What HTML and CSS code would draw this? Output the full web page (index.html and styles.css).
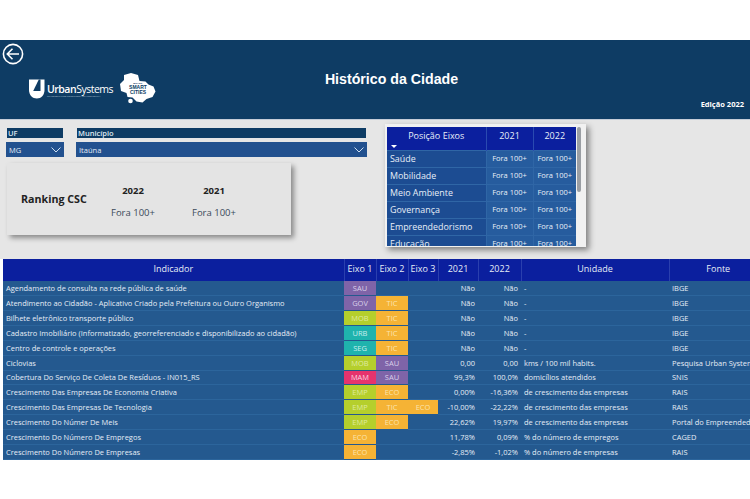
FILE: index.html
```html
<!DOCTYPE html>
<html lang="pt-BR">
<head>
  <meta charset="UTF-8">
  <title>Histórico da Cidade</title>
  <link rel="stylesheet" href="styles.css">
</head>
<body>
  <header class="topo">
    <svg class="voltar" viewBox="0 0 22 22" width="22" height="22">
      <circle cx="11" cy="11" r="9.6" fill="none" stroke="#fff" stroke-width="1.6"/>
      <path d="M17 11H5.5M10.5 5.8L5.3 11l5.2 5.2" fill="none" stroke="#fff" stroke-width="1.6"/>
    </svg>
    <div class="logos">
      <svg class="marca" viewBox="0 0 16 20" width="16" height="20">
        <path d="M0 .5h15.5V11c0 5-3.4 8.5-7.7 8.5S0 16 0 11z" fill="#fff"/>
        <path d="M9.8.5h1.7V12H4.2z" fill="#0e3c64"/>
      </svg>
      <div class="urban">
        <span class="urban-nome"><b>Urban</b>Systems</span>
        <span class="urban-sub">TRANSFORMANDO CONSULTORIA EM INTELIGÊNCIA</span>
      </div>
      <svg class="smart" viewBox="0 0 36 31" width="36" height="31">
        <path d="M11 0l7 2 1.500 6 6 .5 3 3 5 2 2 5-3 5.500-6 2-4 3.500-6-1-4-4-5-.5-1-4L1 18 0 11l4-4V2z" fill="#fff"/>
        <circle cx="10.500" cy="28" r="2.300" fill="#fff"/>
        <text x="18" y="11" class="smart-a">BRASIL</text>
        <text x="18" y="15.500" class="smart-b">SMART</text>
        <text x="18" y="20.500" class="smart-b">CITIES</text>
      </svg>
    </div>
    <h1 class="titulo">Histórico da Cidade</h1>
    <div class="edicao">Edição 2022</div>
  </header>

  <section class="painel">
    <div class="esquerda">
      <div class="filtros">
        <div class="filtro filtro-uf">
          <div class="filtro-nome">UF</div>
          <div class="filtro-caixa">MG
            <svg viewBox="0 0 10 6" width="10" height="6"><path d="M.5.5L5 5 9.500.5" fill="none" stroke="#cfe0f2"/></svg>
          </div>
        </div>
        <div class="filtro filtro-mun">
          <div class="filtro-nome">Município</div>
          <div class="filtro-caixa">Itaúna
            <svg viewBox="0 0 10 6" width="10" height="6"><path d="M.5.5L5 5 9.500.5" fill="none" stroke="#cfe0f2"/></svg>
          </div>
        </div>
      </div>
      <div class="ranking">
        <div class="ranking-nome">Ranking CSC</div>
        <div class="ranking-ano"><b>2022</b><span>Fora 100+</span></div>
        <div class="ranking-ano"><b>2021</b><span>Fora 100+</span></div>
      </div>
    </div>

    <div class="eixos">
      <div class="eixos-clip">
        <table class="eixos-tab">
          <colgroup><col class="e-nome"><col class="e-a"><col class="e-b"></colgroup>
          <thead>
            <tr><th>Posição Eixos<i class="seta"></i></th><th>2021</th><th>2022</th></tr>
          </thead>
          <tbody>
            <tr><td>Saúde</td><td>Fora 100+</td><td>Fora 100+</td></tr>
            <tr><td>Mobilidade</td><td>Fora 100+</td><td>Fora 100+</td></tr>
            <tr><td>Meio Ambiente</td><td>Fora 100+</td><td>Fora 100+</td></tr>
            <tr><td>Governança</td><td>Fora 100+</td><td>Fora 100+</td></tr>
            <tr><td>Empreendedorismo</td><td>Fora 100+</td><td>Fora 100+</td></tr>
            <tr><td>Educação</td><td>Fora 100+</td><td>Fora 100+</td></tr>
          </tbody>
        </table>
      </div>
      <div class="rolagem"><div class="rolagem-barra"></div></div>
    </div>
  </section>

  <table class="dados">
    <colgroup>
      <col class="c-ind"><col class="c-eixo"><col class="c-eixo"><col class="c-eixo3">
      <col class="c-a"><col class="c-b"><col class="c-uni"><col class="c-fonte">
    </colgroup>
    <thead>
      <tr><th>Indicador</th><th>Eixo 1</th><th>Eixo 2</th><th>Eixo 3</th><th>2021</th><th>2022</th><th>Unidade</th><th>Fonte</th></tr>
    </thead>
    <tbody>
      <tr><td>Agendamento de consulta na rede pública de saúde</td><td class="tag sau">SAU</td><td></td><td></td><td class="num">Não</td><td class="num">Não</td><td>-</td><td>IBGE</td></tr>
      <tr><td>Atendimento ao Cidadão - Aplicativo Criado pela Prefeitura ou Outro Organismo</td><td class="tag sau">GOV</td><td class="tag eco">TIC</td><td></td><td class="num">Não</td><td class="num">Não</td><td>-</td><td>IBGE</td></tr>
      <tr><td>Bilhete eletrônico transporte público</td><td class="tag mob">MOB</td><td class="tag eco">TIC</td><td></td><td class="num">Não</td><td class="num">Não</td><td>-</td><td>IBGE</td></tr>
      <tr><td>Cadastro Imobiliário (Informatizado, georreferenciado e disponibilizado ao cidadão)</td><td class="tag urb">URB</td><td class="tag eco">TIC</td><td></td><td class="num">Não</td><td class="num">Não</td><td>-</td><td>IBGE</td></tr>
      <tr><td>Centro de controle e operações</td><td class="tag urb">SEG</td><td class="tag eco">TIC</td><td></td><td class="num">Não</td><td class="num">Não</td><td>-</td><td>IBGE</td></tr>
      <tr><td>Ciclovias</td><td class="tag mob">MOB</td><td class="tag sau">SAU</td><td></td><td class="num">0,00</td><td class="num">0,00</td><td>kms / 100 mil habits.</td><td>Pesquisa Urban Systems</td></tr>
      <tr><td>Cobertura Do Serviço De Coleta De Resíduos - IN015_RS</td><td class="tag mam">MAM</td><td class="tag sau">SAU</td><td></td><td class="num">99,3%</td><td class="num">100,0%</td><td>domicílios atendidos</td><td>SNIS</td></tr>
      <tr><td>Crescimento Das Empresas De Economia Criativa</td><td class="tag mob">EMP</td><td class="tag eco">ECO</td><td></td><td class="num">0,00%</td><td class="num">-16,36%</td><td>de crescimento das empresas</td><td>RAIS</td></tr>
      <tr><td>Crescimento Das Empresas De Tecnologia</td><td class="tag mob">EMP</td><td class="tag eco">TIC</td><td class="tag eco">ECO</td><td class="num">-10,00%</td><td class="num">-22,22%</td><td>de crescimento das empresas</td><td>RAIS</td></tr>
      <tr><td>Crescimento Do Númer De Meis</td><td class="tag mob">EMP</td><td class="tag eco">ECO</td><td></td><td class="num">22,62%</td><td class="num">19,97%</td><td>de crescimento das empresas</td><td>Portal do Empreendedor</td></tr>
      <tr><td>Crescimento Do Número De Empregos</td><td class="tag eco">ECO</td><td></td><td></td><td class="num">11,78%</td><td class="num">0,09%</td><td>% do número de empregos</td><td>CAGED</td></tr>
      <tr><td>Crescimento Do Número De Empresas</td><td class="tag eco">ECO</td><td></td><td></td><td class="num">-2,85%</td><td class="num">-1,02%</td><td>% do número de empresas</td><td>RAIS</td></tr>
    </tbody>
  </table>
</body>
</html>
```

FILE: styles.css
```css
html {
  font-family: "Open Sans", sans-serif;
}

body {
  margin: 0;
  padding-top: 40px;
  background-color: #fff;
  overflow: hidden;
}

/* topo */
.topo {
  position: relative;
  height: 79px;
  background-color: #0e3c64;
  color: #fff;
}

.voltar {
  position: absolute;
  left: 2px;
  top: 3px;
}

.logos {
  position: absolute;
  left: 29px;
  top: 33px;
  display: flex;
  align-items: center;
}

.urban {
  display: flex;
  flex-direction: column;
  margin-left: 2px;
  margin-top: 5px;
  width: 64px;
}

.urban-nome {
  font-size: 10.5px;
  line-height: 12px;
  letter-spacing: -0.5px;
  white-space: nowrap;
}

.urban-nome b {
  font-weight: 600;
}

.urban-sub {
  font-size: 2.2px;
  line-height: 4px;
  white-space: nowrap;
  color: #b9c8d6;
}

.smart {
  margin-left: 9px;
}

.smart-a,
.smart-b {
  font-family: "Liberation Sans", sans-serif;
  font-weight: 700;
  text-anchor: middle;
  fill: #0e3c64;
}

.smart-a {
  font-size: 2.5px;
}

.smart-b {
  font-size: 5px;
}

.titulo {
  margin: 0;
  padding: 31px 0 0 33px;
  text-align: center;
  font-family: "Liberation Sans", sans-serif;
  font-size: 14.2px;
  line-height: 17px;
  font-weight: 700;
}

.edicao {
  position: absolute;
  right: 6px;
  bottom: 9px;
  font-size: 7.5px;
  line-height: 11px;
  font-weight: 700;
}

/* painel cinza */
.painel {
  display: flex;
  height: 140px;
  background-color: #e6e6e6;
  border-top: 1px solid #c4ccd8;
  box-sizing: border-box;
}

.esquerda {
  width: 385px;
  flex: none;
  padding: 8px 0 0 6px;
  box-sizing: border-box;
}

.filtros {
  display: flex;
  gap: 12px;
}

.filtro-uf {
  width: 58px;
}

.filtro-mun {
  width: 291px;
}

.filtro-nome {
  height: 10px;
  margin: 0 1px 4px;
  padding-left: 1px;
  background-color: #0e3c64;
  color: #dfe8f1;
  font-size: 7.5px;
  font-weight: 600;
  line-height: 10px;
}

.filtro-caixa {
  display: flex;
  justify-content: space-between;
  align-items: center;
  height: 15px;
  padding: 0 3px;
  background-color: #22518f;
  color: #e3ebf5;
  font-size: 7.5px;
}

.ranking {
  display: flex;
  align-items: center;
  width: 284px;
  height: 72px;
  margin: 6px 0 0 1px;
  background-color: #e4e4e4;
  box-shadow: 3px 3px 5px rgba(0, 0, 0, 0.4);
  color: #222;
}

.ranking-nome {
  width: 102px;
  padding-left: 14px;
  box-sizing: border-box;
  font-size: 10.7px;
  font-weight: 700;
}

.ranking-ano {
  display: flex;
  flex-direction: column;
  align-items: center;
  width: 48px;
  margin-right: 33px;
  padding-top: 4px;
  font-size: 9.5px;
}

.ranking-ano b {
  margin-bottom: 9px;
}

.ranking-ano span {
  color: #3a4a5a;
  white-space: nowrap;
}

/* posicao eixos */
.eixos {
  display: flex;
  width: 201px;
  height: 123px;
  margin-top: 4px;
  padding: 3px 5px 1px 2px;
  box-sizing: border-box;
  background-color: #f1f1f1;
  box-shadow: 3px 3px 6px rgba(0, 0, 0, 0.45);
}

.eixos-clip {
  width: 189px;
  height: 119px;
  overflow: hidden;
}

.eixos-tab {
  width: 189px;
  table-layout: fixed;
  border-collapse: collapse;
  color: #e8eff8;
}

.e-nome { width: 99px; }
.e-a { width: 47px; }
.e-b { width: 43px; }

.eixos-tab th {
  position: relative;
  height: 23px;
  padding: 0 0 6px;
  box-sizing: border-box;
  background-color: #0b1f9e;
  border-left: 1px solid #2a4ab0;
  font-size: 9px;
  font-weight: 400;
}

.eixos-tab th:first-child {
  border-left: 0;
}

.seta {
  position: absolute;
  left: 4px;
  bottom: 2px;
  border: 3px solid transparent;
  border-top: 3px solid #fff;
  border-bottom: 0;
}

.eixos-tab td {
  height: 17px;
  padding: 0;
  box-sizing: border-box;
  background-color: #265c9e;
  border-top: 1px solid #2f66a6;
  border-left: 1px solid #2f66a6;
  font-size: 7.5px;
  line-height: 15px;
  text-align: center;
  white-space: nowrap;
}

.eixos-tab td:first-child {
  padding-left: 3px;
  background-color: #1c4c92;
  border-left: 0;
  font-size: 8.9px;
  text-align: left;
}

.rolagem {
  width: 4px;
  margin-left: 1px;
}

.rolagem-barra {
  height: 65px;
  border-radius: 2px;
  background-color: #9a9ea3;
}

/* tabela principal */
.dados {
  width: 764px;
  margin-left: 3px;
  table-layout: fixed;
  border-collapse: collapse;
  color: #e6edf6;
}

.c-ind { width: 341px; }
.c-eixo { width: 32px; }
.c-eixo3 { width: 30px; }
.c-a { width: 40px; }
.c-b { width: 43px; }
.c-uni { width: 148px; }
.c-fonte { width: 98px; }

.dados th {
  height: 22px;
  padding: 0 0 4px;
  box-sizing: border-box;
  background-color: #0b1f9e;
  border-left: 1px solid #2a3fae;
  font-size: 9px;
  font-weight: 400;
  white-space: nowrap;
}

.dados th:first-child {
  border-left: 0;
}

.dados td {
  height: 14.85px;
  padding: 0 0 0 3px;
  background-color: #24598f;
  border-bottom: 1px solid #2c659c;
  box-sizing: border-box;
  font-size: 7.47px;
  line-height: 12px;
  white-space: nowrap;
  overflow: hidden;
}

.dados td.num {
  padding: 0 3px 0 0;
  text-align: right;
}

.dados td.tag {
  padding: 0;
  text-align: center;
  border-bottom-color: #24598f;
}

.dados .sau { background-color: #7f64a8; color: #d9d0ea; }
.dados .mob { background-color: #b5cf2c; color: #dfeaa0; }
.dados .urb { background-color: #1fb3ad; color: #c9eeee; }
.dados .mam { background-color: #e6336d; color: #f8d5e0; }
.dados .eco { background-color: #f5b335; color: #fbe3ae; }
```
